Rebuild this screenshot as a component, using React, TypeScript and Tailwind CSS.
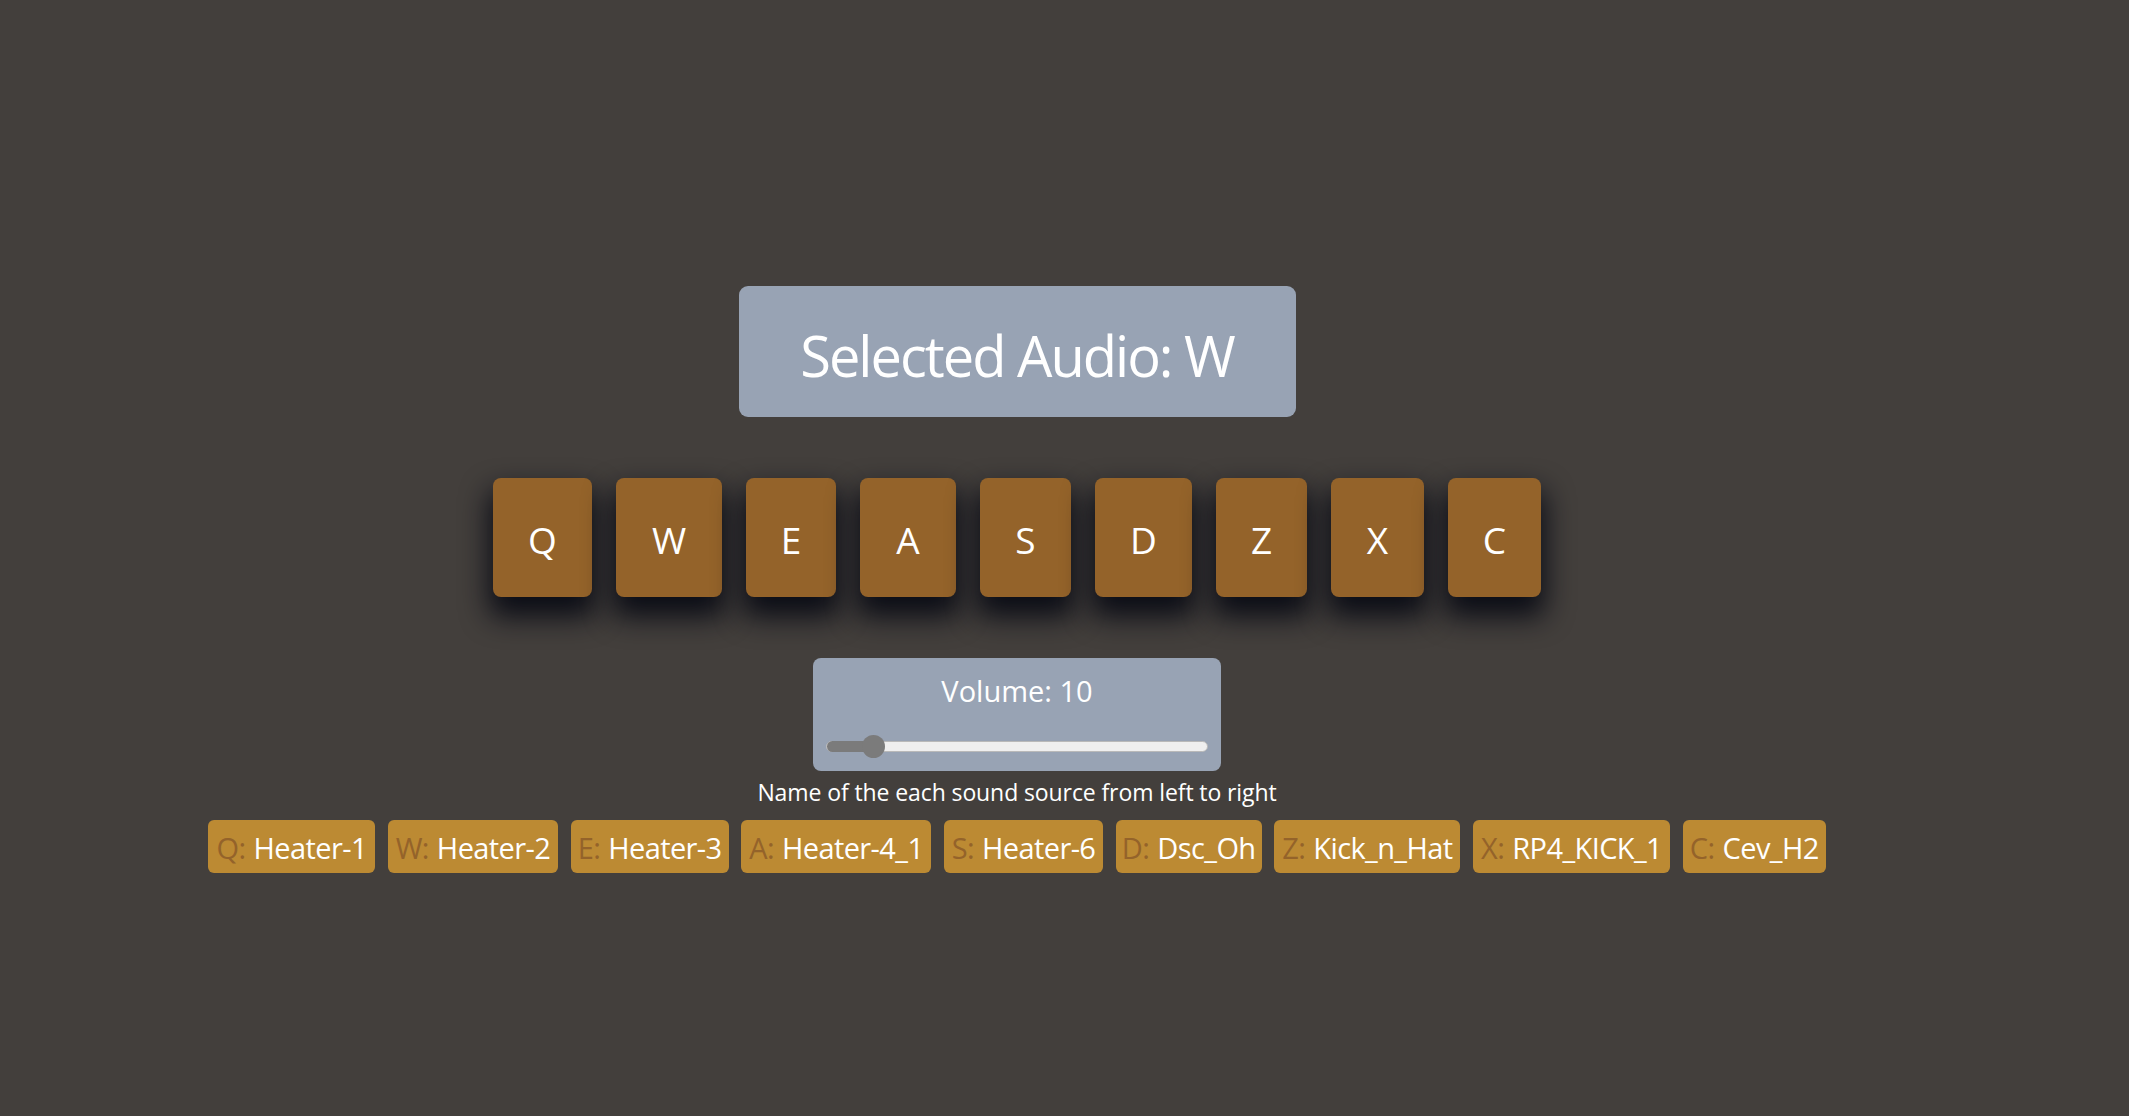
import React from "react";

interface Pad {
  key: string;
  name: string;
  padWidth: string;
  tagWidth: string;
}

const pads: Pad[] = [
  { key: "Q", name: "Heater-1", padWidth: "w-[99px]", tagWidth: "w-[167px]" },
  { key: "W", name: "Heater-2", padWidth: "w-[106px]", tagWidth: "w-[170px]" },
  { key: "E", name: "Heater-3", padWidth: "w-[90px]", tagWidth: "w-[158px]" },
  { key: "A", name: "Heater-4_1", padWidth: "w-[96px]", tagWidth: "w-[190px]" },
  { key: "S", name: "Heater-6", padWidth: "w-[91px]", tagWidth: "w-[159px]" },
  { key: "D", name: "Dsc_Oh", padWidth: "w-[97px]", tagWidth: "w-[146px]" },
  { key: "Z", name: "Kick_n_Hat", padWidth: "w-[91px]", tagWidth: "w-[186px]" },
  { key: "X", name: "RP4_KICK_1", padWidth: "w-[93px]", tagWidth: "w-[197px]" },
  { key: "C", name: "Cev_H2", padWidth: "w-[93px]", tagWidth: "w-[143px]" },
];

export default function App() {
  const volume = 10;

  return (
    <div
      className="min-h-screen w-full bg-[#433f3c] text-white flex flex-col items-center pt-[286px] pr-[95px]"
      style={{ fontFamily: '"Open Sans", "Noto Sans", sans-serif' }}
    >
      {/* Display */}
      <div className="w-[557px] h-[131px] rounded-[9px] bg-[#98a3b4] flex items-center justify-center">
        <span className="text-[56px] leading-none tracking-[-2px] pt-[6px]">
          Selected Audio: W
        </span>
      </div>

      {/* Pads */}
      <div className="flex gap-[24px] mt-[61px]">
        {pads.map((pad) => (
          <button
            key={pad.key}
            className={`${pad.padWidth} h-[119px] rounded-[8px] bg-[#94632a] text-[37px] leading-none flex items-center justify-center pt-[4px] shadow-[0_16px_28px_4px_rgba(8,11,20,0.95)]`}
          >
            {pad.key}
          </button>
        ))}
      </div>

      {/* Volume */}
      <div className="w-[408px] h-[113px] mt-[61px] rounded-[8px] bg-[#98a3b4] flex flex-col items-center pt-[13px] px-[13px]">
        <div className="text-[29px] leading-[40px]">Volume: {volume}</div>
        <div className="relative w-full h-[11px] mt-[30px] rounded-full bg-[#efefef] border border-[#b9b9b9]">
          <div className="absolute left-0 top-[-1px] h-[11px] w-[50px] rounded-full bg-[#7b7b7b]" />
          <div className="absolute left-[35px] top-[-7px] w-[23px] h-[23px] rounded-full bg-[#7b7b7b]" />
        </div>
      </div>

      <p className="text-[23px] leading-[36px] mt-[3px] tracking-[-0.1px]">
        Name of the each sound source from left to right
      </p>

      {/* Sound names */}
      <div className="flex gap-[12.7px] mt-[10px]">
        {pads.map((pad) => (
          <div
            key={pad.key}
            className={`${pad.tagWidth} h-[53px] rounded-[6px] bg-[#bc8a33] flex items-center justify-center whitespace-nowrap text-[29px] tracking-[-0.6px] leading-none pt-[2px]`}
          >
            <span className="text-[#94632a]">{pad.key}:</span>
            <span className="ml-[8px]">{pad.name}</span>
          </div>
        ))}
      </div>
    </div>
  );
}
